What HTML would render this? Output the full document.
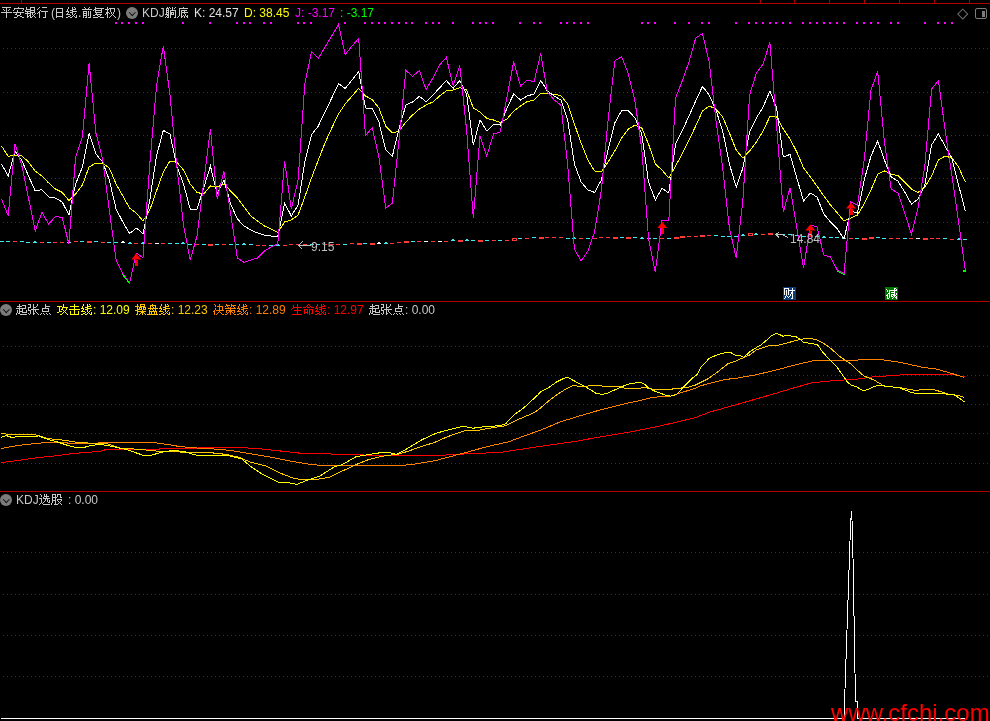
<!DOCTYPE html><html><head><meta charset="utf-8"><style>
html,body{margin:0;padding:0;background:#000;}
body{width:990px;height:721px;position:relative;overflow:hidden;font-family:"Liberation Sans",sans-serif;font-size:12px;}
.t{position:absolute;white-space:nowrap;line-height:14px;height:14px;will-change:transform;}
.ic{position:absolute;width:12px;height:12px;border-radius:50%;background:#7c7c7c;}
.ic:after{content:"";position:absolute;left:3.6px;top:2.6px;width:3.5px;height:3.5px;border-right:1.5px solid #111;border-bottom:1.5px solid #111;transform:rotate(45deg);}
.wm{position:absolute;left:831px;top:698px;color:#ff0000;font-size:24px;line-height:30px;white-space:nowrap;}
</style></head><body>
<svg width="990" height="721" viewBox="0 0 990 721" shape-rendering="crispEdges" style="position:absolute;left:0;top:0"><rect x="0" y="3" width="990" height="1" fill="#b00000"/><rect x="21" y="0" width="1" height="3" fill="#b00000"/><rect x="760" y="0" width="1" height="3" fill="#b00000"/><rect x="794" y="0" width="1" height="3" fill="#b00000"/><rect x="829" y="0" width="1" height="3" fill="#b00000"/><rect x="864" y="0" width="1" height="3" fill="#b00000"/><rect x="899" y="0" width="1" height="3" fill="#b00000"/><rect x="934" y="0" width="1" height="3" fill="#b00000"/><rect x="969" y="0" width="1" height="3" fill="#b00000"/><rect x="0" y="301" width="990" height="1" fill="#b00000"/><rect x="0" y="491" width="990" height="1" fill="#b00000"/><line x1="3" y1="48.5" x2="990" y2="48.5" stroke="#b00000" stroke-width="1" stroke-dasharray="1 3"/><line x1="3" y1="92.5" x2="990" y2="92.5" stroke="#b00000" stroke-width="1" stroke-dasharray="1 3"/><line x1="3" y1="135.5" x2="990" y2="135.5" stroke="#b00000" stroke-width="1" stroke-dasharray="1 3"/><line x1="3" y1="178.5" x2="990" y2="178.5" stroke="#b00000" stroke-width="1" stroke-dasharray="1 3"/><line x1="3" y1="222.5" x2="990" y2="222.5" stroke="#b00000" stroke-width="1" stroke-dasharray="1 3"/><line x1="3" y1="346.5" x2="990" y2="346.5" stroke="#b00000" stroke-width="1" stroke-dasharray="1 3"/><line x1="3" y1="375.5" x2="990" y2="375.5" stroke="#b00000" stroke-width="1" stroke-dasharray="1 3"/><line x1="3" y1="404.5" x2="990" y2="404.5" stroke="#b00000" stroke-width="1" stroke-dasharray="1 3"/><line x1="3" y1="433.5" x2="990" y2="433.5" stroke="#b00000" stroke-width="1" stroke-dasharray="1 3"/><line x1="3" y1="463.5" x2="990" y2="463.5" stroke="#b00000" stroke-width="1" stroke-dasharray="1 3"/><line x1="3" y1="552.5" x2="990" y2="552.5" stroke="#b00000" stroke-width="1" stroke-dasharray="1 3"/><line x1="3" y1="594.5" x2="990" y2="594.5" stroke="#b00000" stroke-width="1" stroke-dasharray="1 3"/><line x1="3" y1="635.5" x2="990" y2="635.5" stroke="#b00000" stroke-width="1" stroke-dasharray="1 3"/><line x1="3" y1="676.5" x2="990" y2="676.5" stroke="#b00000" stroke-width="1" stroke-dasharray="1 3"/><rect x="115" y="22" width="2" height="2" fill="#ff00ff"/><rect x="121" y="22" width="2" height="2" fill="#ff00ff"/><rect x="128" y="22" width="2" height="2" fill="#ff00ff"/><rect x="135" y="22" width="2" height="2" fill="#ff00ff"/><rect x="142" y="22" width="2" height="2" fill="#ff00ff"/><rect x="182" y="22" width="2" height="2" fill="#ff00ff"/><rect x="209" y="22" width="2" height="2" fill="#ff00ff"/><rect x="236" y="22" width="2" height="2" fill="#ff00ff"/><rect x="243" y="22" width="2" height="2" fill="#ff00ff"/><rect x="249" y="22" width="2" height="2" fill="#ff00ff"/><rect x="263" y="22" width="2" height="2" fill="#ff00ff"/><rect x="270" y="22" width="2" height="2" fill="#ff00ff"/><rect x="297" y="22" width="2" height="2" fill="#ff00ff"/><rect x="303" y="22" width="2" height="2" fill="#ff00ff"/><rect x="310" y="22" width="2" height="2" fill="#ff00ff"/><rect x="344" y="22" width="2" height="2" fill="#ff00ff"/><rect x="364" y="22" width="2" height="2" fill="#ff00ff"/><rect x="371" y="22" width="2" height="2" fill="#ff00ff"/><rect x="378" y="22" width="2" height="2" fill="#ff00ff"/><rect x="384" y="22" width="2" height="2" fill="#ff00ff"/><rect x="391" y="22" width="2" height="2" fill="#ff00ff"/><rect x="398" y="22" width="2" height="2" fill="#ff00ff"/><rect x="405" y="22" width="2" height="2" fill="#ff00ff"/><rect x="411" y="22" width="2" height="2" fill="#ff00ff"/><rect x="425" y="22" width="2" height="2" fill="#ff00ff"/><rect x="432" y="22" width="2" height="2" fill="#ff00ff"/><rect x="438" y="22" width="2" height="2" fill="#ff00ff"/><rect x="452" y="22" width="2" height="2" fill="#ff00ff"/><rect x="472" y="22" width="2" height="2" fill="#ff00ff"/><rect x="479" y="22" width="2" height="2" fill="#ff00ff"/><rect x="485" y="22" width="2" height="2" fill="#ff00ff"/><rect x="492" y="22" width="2" height="2" fill="#ff00ff"/><rect x="519" y="22" width="2" height="2" fill="#ff00ff"/><rect x="533" y="22" width="2" height="2" fill="#ff00ff"/><rect x="539" y="22" width="2" height="2" fill="#ff00ff"/><rect x="560" y="22" width="2" height="2" fill="#ff00ff"/><rect x="566" y="22" width="2" height="2" fill="#ff00ff"/><rect x="573" y="22" width="2" height="2" fill="#ff00ff"/><rect x="580" y="22" width="2" height="2" fill="#ff00ff"/><rect x="587" y="22" width="2" height="2" fill="#ff00ff"/><rect x="641" y="22" width="2" height="2" fill="#ff00ff"/><rect x="647" y="22" width="2" height="2" fill="#ff00ff"/><rect x="654" y="22" width="2" height="2" fill="#ff00ff"/><rect x="674" y="22" width="2" height="2" fill="#ff00ff"/><rect x="688" y="22" width="2" height="2" fill="#ff00ff"/><rect x="701" y="22" width="2" height="2" fill="#ff00ff"/><rect x="708" y="22" width="2" height="2" fill="#ff00ff"/><rect x="735" y="22" width="2" height="2" fill="#ff00ff"/><rect x="748" y="22" width="2" height="2" fill="#ff00ff"/><rect x="755" y="22" width="2" height="2" fill="#ff00ff"/><rect x="762" y="22" width="2" height="2" fill="#ff00ff"/><rect x="769" y="22" width="2" height="2" fill="#ff00ff"/><rect x="775" y="22" width="2" height="2" fill="#ff00ff"/><rect x="782" y="22" width="2" height="2" fill="#ff00ff"/><rect x="789" y="22" width="2" height="2" fill="#ff00ff"/><rect x="802" y="22" width="2" height="2" fill="#ff00ff"/><rect x="809" y="22" width="2" height="2" fill="#ff00ff"/><rect x="816" y="22" width="2" height="2" fill="#ff00ff"/><rect x="823" y="22" width="2" height="2" fill="#ff00ff"/><rect x="829" y="22" width="2" height="2" fill="#ff00ff"/><rect x="836" y="22" width="2" height="2" fill="#ff00ff"/><rect x="843" y="22" width="2" height="2" fill="#ff00ff"/><rect x="856" y="22" width="2" height="2" fill="#ff00ff"/><rect x="863" y="22" width="2" height="2" fill="#ff00ff"/><rect x="870" y="22" width="2" height="2" fill="#ff00ff"/><rect x="877" y="22" width="2" height="2" fill="#ff00ff"/><rect x="890" y="22" width="2" height="2" fill="#ff00ff"/><rect x="897" y="22" width="2" height="2" fill="#ff00ff"/><rect x="924" y="22" width="2" height="2" fill="#ff00ff"/><rect x="937" y="22" width="2" height="2" fill="#ff00ff"/><rect x="944" y="22" width="2" height="2" fill="#ff00ff"/><rect x="951" y="22" width="2" height="2" fill="#ff00ff"/><rect x="0" y="241" width="4" height="1" fill="#40e8f0"/><rect x="6" y="241" width="4" height="1" fill="#40e8f0"/><rect x="13" y="241" width="4" height="1" fill="#ff3838"/><rect x="20" y="241" width="4" height="1" fill="#40e8f0"/><rect x="26" y="242" width="4" height="1" fill="#40e8f0"/><rect x="33" y="242" width="4" height="1" fill="#40e8f0"/><rect x="34" y="241" width="2" height="1" fill="#40e8f0"/><rect x="40" y="242" width="4" height="1" fill="#ff3838"/><rect x="47" y="242" width="4" height="1" fill="#40e8f0"/><rect x="53" y="242" width="4" height="1" fill="#ff3838"/><rect x="60" y="242" width="4" height="1" fill="#ff3838"/><rect x="67" y="242" width="4" height="1" fill="#40e8f0"/><rect x="74" y="241" width="4" height="1" fill="#ff3838"/><rect x="80" y="241" width="4" height="1" fill="#40e8f0"/><rect x="87" y="241" width="5" height="2" fill="#ff3838"/><rect x="94" y="241" width="4" height="1" fill="#40e8f0"/><rect x="101" y="242" width="4" height="1" fill="#ff3838"/><rect x="107" y="242" width="4" height="1" fill="#40e8f0"/><rect x="114" y="242" width="4" height="1" fill="#40e8f0"/><rect x="121" y="242" width="4" height="1" fill="#ffffff"/><rect x="122" y="241" width="2" height="1" fill="#ffffff"/><rect x="128" y="243" width="4" height="1" fill="#40e8f0"/><rect x="129" y="242" width="2" height="1" fill="#40e8f0"/><rect x="134" y="243" width="4" height="1" fill="#ff3838"/><rect x="141" y="243" width="4" height="1" fill="#40e8f0"/><rect x="142" y="242" width="2" height="1" fill="#40e8f0"/><rect x="148" y="243" width="4" height="1" fill="#ff3838"/><rect x="155" y="243" width="4" height="1" fill="#ffffff"/><rect x="161" y="243" width="4" height="1" fill="#ff3838"/><rect x="168" y="243" width="4" height="1" fill="#40e8f0"/><rect x="175" y="243" width="4" height="1" fill="#40e8f0"/><rect x="181" y="243" width="4" height="1" fill="#40e8f0"/><rect x="182" y="242" width="2" height="1" fill="#40e8f0"/><rect x="188" y="244" width="4" height="1" fill="#40e8f0"/><rect x="195" y="244" width="4" height="1" fill="#ff3838"/><rect x="202" y="244" width="4" height="1" fill="#40e8f0"/><rect x="208" y="244" width="5" height="2" fill="#ff3838"/><rect x="215" y="244" width="4" height="1" fill="#40e8f0"/><rect x="222" y="244" width="4" height="1" fill="#ff3838"/><rect x="229" y="244" width="4" height="1" fill="#40e8f0"/><rect x="235" y="244" width="4" height="1" fill="#40e8f0"/><rect x="242" y="244" width="4" height="1" fill="#40e8f0"/><rect x="243" y="243" width="2" height="1" fill="#40e8f0"/><rect x="249" y="244" width="4" height="1" fill="#40e8f0"/><rect x="256" y="245" width="4" height="1" fill="#ff3838"/><rect x="262" y="245" width="4" height="1" fill="#ff3838"/><rect x="269" y="245" width="4" height="1" fill="#40e8f0"/><rect x="276" y="245" width="4" height="1" fill="#40e8f0"/><rect x="277" y="244" width="2" height="1" fill="#40e8f0"/><rect x="283" y="245" width="4" height="1" fill="#ff3838"/><rect x="289" y="244" width="4" height="1" fill="#ff3838"/><rect x="296" y="244" width="4" height="1" fill="#ff3838"/><rect x="303" y="244" width="4" height="1" fill="#ff3838"/><rect x="310" y="244" width="4" height="1" fill="#40e8f0"/><rect x="316" y="244" width="4" height="1" fill="#40e8f0"/><rect x="323" y="244" width="4" height="1" fill="#ff3838"/><rect x="330" y="244" width="4" height="1" fill="#ff3838"/><rect x="336" y="244" width="4" height="1" fill="#ff3838"/><rect x="343" y="244" width="4" height="1" fill="#40e8f0"/><rect x="350" y="243" width="4" height="1" fill="#ff3838"/><rect x="357" y="243" width="5" height="2" fill="#ff3838"/><rect x="363" y="243" width="4" height="1" fill="#40e8f0"/><rect x="370" y="243" width="5" height="2" fill="#ff3838"/><rect x="377" y="243" width="4" height="1" fill="#ffffff"/><rect x="378" y="242" width="2" height="1" fill="#ffffff"/><rect x="384" y="243" width="4" height="1" fill="#40e8f0"/><rect x="385" y="242" width="2" height="1" fill="#40e8f0"/><rect x="390" y="243" width="4" height="1" fill="#ff3838"/><rect x="397" y="242" width="4" height="1" fill="#ff3838"/><rect x="404" y="241" width="5" height="2" fill="#ff3838"/><rect x="411" y="241" width="4" height="1" fill="#40e8f0"/><rect x="417" y="241" width="4" height="1" fill="#ff3838"/><rect x="424" y="241" width="4" height="1" fill="#ffffff"/><rect x="431" y="241" width="4" height="1" fill="#ff3838"/><rect x="438" y="241" width="4" height="1" fill="#ffffff"/><rect x="444" y="241" width="4" height="1" fill="#ff3838"/><rect x="451" y="240" width="4" height="1" fill="#40e8f0"/><rect x="452" y="239" width="2" height="1" fill="#40e8f0"/><rect x="458" y="240" width="5" height="2" fill="#ff3838"/><rect x="465" y="240" width="4" height="1" fill="#40e8f0"/><rect x="466" y="239" width="2" height="1" fill="#40e8f0"/><rect x="471" y="240" width="4" height="1" fill="#40e8f0"/><rect x="478" y="240" width="5" height="2" fill="#ff3838"/><rect x="485" y="240" width="4" height="1" fill="#40e8f0"/><rect x="492" y="240" width="4" height="1" fill="#ff3838"/><rect x="498" y="240" width="4" height="1" fill="#40e8f0"/><rect x="505" y="240" width="4" height="1" fill="#ff3838"/><rect x="512.5" y="238.5" width="4" height="2" fill="none" stroke="#ff3838" stroke-width="1"/><rect x="518" y="238" width="4" height="1" fill="#40e8f0"/><rect x="525" y="238" width="4" height="1" fill="#ff3838"/><rect x="532" y="237" width="4" height="1" fill="#40e8f0"/><rect x="539" y="237" width="5" height="2" fill="#ff3838"/><rect x="545" y="237" width="4" height="1" fill="#ff3838"/><rect x="552" y="237" width="4" height="1" fill="#ff3838"/><rect x="559" y="237" width="4" height="1" fill="#ff3838"/><rect x="566" y="238" width="4" height="1" fill="#40e8f0"/><rect x="572" y="238" width="4" height="1" fill="#40e8f0"/><rect x="573" y="237" width="2" height="1" fill="#40e8f0"/><rect x="579" y="238" width="4" height="1" fill="#ff3838"/><rect x="586" y="238" width="4" height="1" fill="#40e8f0"/><rect x="593" y="238" width="4" height="1" fill="#ff3838"/><rect x="599" y="237" width="4" height="1" fill="#ff3838"/><rect x="606" y="237" width="4" height="1" fill="#ff3838"/><rect x="613" y="237" width="5" height="2" fill="#ff3838"/><rect x="620" y="237" width="4" height="1" fill="#40e8f0"/><rect x="626" y="237" width="5" height="2" fill="#ff3838"/><rect x="633" y="237" width="4" height="1" fill="#40e8f0"/><rect x="640" y="238" width="4" height="1" fill="#40e8f0"/><rect x="641" y="237" width="2" height="1" fill="#40e8f0"/><rect x="647" y="238" width="4" height="1" fill="#40e8f0"/><rect x="653" y="238" width="4" height="1" fill="#40e8f0"/><rect x="660" y="238" width="4" height="1" fill="#ff3838"/><rect x="667" y="238" width="4" height="1" fill="#40e8f0"/><rect x="674" y="237" width="5" height="2" fill="#ff3838"/><rect x="680" y="236" width="5" height="2" fill="#ff3838"/><rect x="687" y="236" width="4" height="1" fill="#ff3838"/><rect x="694" y="236" width="4" height="1" fill="#ff3838"/><rect x="700" y="235" width="5" height="2" fill="#ff3838"/><rect x="707" y="235" width="4" height="1" fill="#ff3838"/><rect x="714" y="235" width="4" height="1" fill="#40e8f0"/><rect x="721" y="236" width="4" height="1" fill="#40e8f0"/><rect x="727" y="236" width="4" height="1" fill="#40e8f0"/><rect x="734" y="236" width="4" height="1" fill="#40e8f0"/><rect x="741" y="235" width="4" height="1" fill="#40e8f0"/><rect x="742" y="234" width="2" height="1" fill="#40e8f0"/><rect x="748.5" y="233.5" width="4" height="2" fill="none" stroke="#ff3838" stroke-width="1"/><rect x="754" y="234" width="4" height="1" fill="#40e8f0"/><rect x="755" y="233" width="2" height="1" fill="#40e8f0"/><rect x="761" y="234" width="4" height="1" fill="#ff3838"/><rect x="768" y="233" width="5" height="2" fill="#ff3838"/><rect x="775" y="234" width="4" height="1" fill="#40e8f0"/><rect x="781" y="234" width="4" height="1" fill="#40e8f0"/><rect x="788" y="234" width="4" height="1" fill="#40e8f0"/><rect x="795" y="235" width="4" height="1" fill="#40e8f0"/><rect x="802" y="236" width="4" height="1" fill="#40e8f0"/><rect x="808" y="236" width="4" height="1" fill="#40e8f0"/><rect x="815" y="236" width="4" height="1" fill="#40e8f0"/><rect x="822" y="237" width="4" height="1" fill="#40e8f0"/><rect x="823" y="236" width="2" height="1" fill="#40e8f0"/><rect x="829" y="237" width="4" height="1" fill="#40e8f0"/><rect x="835" y="237" width="4" height="1" fill="#40e8f0"/><rect x="842" y="238" width="4" height="1" fill="#40e8f0"/><rect x="843" y="237" width="2" height="1" fill="#40e8f0"/><rect x="849" y="238" width="4" height="1" fill="#ff3838"/><rect x="855" y="238" width="4" height="1" fill="#40e8f0"/><rect x="862" y="238" width="5" height="2" fill="#ff3838"/><rect x="869" y="237" width="5" height="2" fill="#ff3838"/><rect x="876" y="237" width="4" height="1" fill="#40e8f0"/><rect x="882" y="238" width="4" height="1" fill="#40e8f0"/><rect x="889" y="238" width="4" height="1" fill="#ff3838"/><rect x="896" y="238" width="4" height="1" fill="#ff3838"/><rect x="903" y="238" width="4" height="1" fill="#40e8f0"/><rect x="909" y="238" width="4" height="1" fill="#ff3838"/><rect x="916" y="238" width="4" height="1" fill="#ffffff"/><rect x="923" y="238" width="5" height="2" fill="#ff3838"/><rect x="930" y="238" width="4" height="1" fill="#ff3838"/><rect x="936" y="238" width="4" height="1" fill="#ff3838"/><rect x="943" y="238" width="4" height="1" fill="#40e8f0"/><rect x="950" y="239" width="4" height="1" fill="#ff3838"/><rect x="957" y="239" width="4" height="1" fill="#40e8f0"/><rect x="958" y="238" width="2" height="1" fill="#40e8f0"/><rect x="963" y="239" width="4" height="1" fill="#40e8f0"/><polyline points="1.5,146 8.2,156.4 15,155 21.7,155.6 28.5,162 35.2,171 41.9,176 48.7,183 55.4,189 62.2,192.4 68.9,200.4 75.6,194 82.4,185 89.1,167 95.9,163 102.6,163 109.3,168 116.1,184 122.8,196 129.6,208 136.3,213 143,221 149.8,210 156.5,191 163.3,172 170,161 176.7,162 183.5,170 190.2,184 197,192.4 203.7,194 210.4,186 217.2,187 223.9,184 230.7,191 237.4,198 244.1,207 250.9,216 257.6,221 264.4,226 271.1,229 277.8,232.4 284.6,222 291.3,220 298.1,215 304.8,197 311.5,178 318.3,160 325,143 331.8,128 338.5,114 345.2,104 352,96 358.7,88.4 365.5,96 372.2,99.6 378.9,108 385.7,126 392.4,133 399.2,131 405.9,122 412.6,115 419.4,109 426.1,105 432.9,102 439.6,96 446.3,91 453.1,90 459.8,87.6 466.6,90 473.3,108 480,112 486.8,118.4 493.5,120 500.3,122.4 507,119 513.7,111 520.5,106 527.2,101.6 534,100 540.7,93.6 547.4,93.6 554.2,94.4 560.9,95.6 567.7,104 574.4,124 581.1,143 587.9,160 594.6,171 601.4,171.6 608.1,162 614.8,151 621.6,138 628.3,129 635.1,125 641.8,128 648.5,144 655.3,164 662,170 668.8,178 675.5,166 682.2,154 689,140 695.7,126 702.5,111 709.2,106 715.9,109 722.7,117 729.4,133 736.2,150 742.9,158 749.6,151 756.4,142 763.1,131 769.9,116.4 776.6,117 783.3,129 790.1,139 796.8,152 803.6,168 810.3,177 817,186 823.8,196 830.5,205 837.3,213 844,221 850.7,218 857.5,215 864.2,204 871,190 877.7,174 884.4,171 891.2,174 897.9,175.6 904.7,182 911.4,189 918.1,192.4 924.9,187 931.6,176 938.4,160 945.1,156 951.8,158 958.6,167 965.3,182" fill="none" stroke="#ffff00" stroke-width="1" /><polyline points="1.5,164 8.2,176 15,151 21.7,160 28.5,176 35.2,191 41.9,189.6 48.7,197 55.4,198 62.2,202 68.9,215 75.6,184 82.4,167 89.1,133.6 95.9,154 102.6,162 109.3,180 116.1,209 122.8,222 129.6,233.6 136.3,228 143,233.6 149.8,200 156.5,156 163.3,130.4 170,134 176.7,166 183.5,184 190.2,209 197,209 203.7,188 210.4,166 217.2,194 223.9,180 230.7,204 237.4,219 244.1,226 250.9,230 257.6,233 264.4,235 271.1,236 277.8,236.4 284.6,203 291.3,216 298.1,205 304.8,162 311.5,135 318.3,126 325,112 331.8,98 338.5,83.6 345.2,88.4 352,80 358.7,71.6 365.5,108 372.2,108.4 378.9,122 385.7,150 392.4,156 399.2,128 405.9,105 412.6,102 419.4,96.4 426.1,101.6 432.9,95 439.6,88 446.3,80.4 453.1,88.4 459.8,80.4 466.6,94 473.3,145 480,120 486.8,131 493.5,124.4 500.3,125 507,108 513.7,94 520.5,100 527.2,96 534,94 540.7,80.4 547.4,91 554.2,96 560.9,100 567.7,120 574.4,164 581.1,182 587.9,190 594.6,192.4 601.4,180 608.1,150 614.8,123 621.6,110.6 628.3,110.6 635.1,118 641.8,134 648.5,182 655.3,200 662,188.4 668.8,193 675.5,144 682.2,131 689,116 695.7,101 702.5,86.4 709.2,95 715.9,110 722.7,131 729.4,164 736.2,187 742.9,168 749.6,132 756.4,118 763.1,107 769.9,91 776.6,108 783.3,157 790.1,154.4 796.8,178 803.6,201 810.3,193 817,197 823.8,214 830.5,222 837.3,229 844,239 850.7,211 857.5,213 864.2,180 871,156 877.7,141 884.4,160 891.2,177 897.9,181 904.7,192 911.4,204 918.1,199 924.9,185 931.6,145 938.4,134 945.1,146 951.8,158 958.6,185 965.3,211" fill="none" stroke="#ffffff" stroke-width="1" /><polyline points="1.5,199 8.2,215.6 15,143.6 21.7,165 28.5,198 35.2,231 41.9,212.4 48.7,224 55.4,216.6 62.2,217.4 68.9,244 75.6,157 82.4,137 89.1,63 95.9,133 102.6,159 109.3,210 116.1,260 122.8,273.6 129.6,283 136.3,253 143,257.6 149.8,164 156.5,86 163.3,46 170,95 176.7,165 183.5,225 190.2,260 197,236 203.7,182 210.4,129 217.2,199 223.9,171 230.7,214 237.4,258 244.1,262.4 250.9,260 257.6,258 264.4,251 271.1,247 277.8,244 284.6,161 291.3,209 298.1,180 304.8,84 311.5,51.6 318.3,58.4 325,47 331.8,36 338.5,24.4 345.2,54.4 352,46 358.7,38.4 365.5,135.6 372.2,127.6 378.9,157 385.7,208 392.4,203 399.2,138 405.9,70.4 412.6,76.4 419.4,70.4 426.1,89.6 432.9,78 439.6,65 446.3,57.4 453.1,85.6 459.8,65.6 466.6,130 473.3,218 480,135.6 486.8,156 493.5,134 500.3,132 507,97 513.7,61.6 520.5,86 527.2,80 534,82 540.7,53.6 547.4,92 554.2,100 560.9,105 567.7,165 574.4,249 581.1,261 587.9,251 594.6,232 601.4,190 608.1,120 614.8,61 621.6,56.6 628.3,73.6 635.1,102 641.8,149 648.5,238 655.3,272 662,220.4 668.8,221 675.5,98 682.2,81 689,62 695.7,38 702.5,33.6 709.2,62 715.9,120 722.7,168 729.4,228 736.2,258 742.9,200 749.6,95 756.4,73 763.1,64 769.9,42.4 776.6,126 783.3,212 790.1,187.6 796.8,228 803.6,268 810.3,225 817,227 823.8,255 830.5,257 837.3,270 844,273.6 850.7,202 857.5,205 864.2,160 871,90 877.7,71.6 884.4,142 891.2,189 897.9,193 904.7,213 911.4,234 918.1,208 924.9,165 931.6,89 938.4,80.5 945.1,130 951.8,175 958.6,222 965.3,270.4" fill="none" stroke="#ff00ff" stroke-width="1" /><polyline points="122.5,274.5 129.5,283.5" fill="none" stroke="#00ff00" stroke-width="1" stroke-width="2"/><polyline points="837.5,271 844.5,275" fill="none" stroke="#00ff00" stroke-width="1" stroke-width="2"/><rect x="963" y="270" width="3" height="2" fill="#00ff00"/><path d="M298.5,245.5 H310.5 M298.5,245.5 L302.5,241.5 M298.5,245.5 L302.5,249.5" stroke="#c0c0c0" fill="none" stroke-width="1"/><path d="M776,234.5 L782,234.5 L788,237.5 M776,234.5 L779,232 M776,234.5 L779,237.5" stroke="#c0c0c0" fill="none" stroke-width="1"/><polygon points="136.3,253.5 131.3,259.5 141.3,259.5" fill="#ff0000" shape-rendering="auto"/><rect x="134.8" y="259.5" width="3" height="6" fill="#ff0000"/><polygon points="662.3,222 657.3,228 667.3,228" fill="#ff0000" shape-rendering="auto"/><rect x="660.8" y="228" width="3" height="6" fill="#ff0000"/><polygon points="810.3,224.5 805.3,230.5 815.3,230.5" fill="#ff0000" shape-rendering="auto"/><rect x="808.8" y="230.5" width="3" height="6" fill="#ff0000"/><polygon points="851,202.5 846,208.5 856,208.5" fill="#ff0000" shape-rendering="auto"/><rect x="849.5" y="208.5" width="3" height="6" fill="#ff0000"/><polyline points="1,462.5 11,461.5 25,459.5 39,457.5 59,455.5 72,453.5 86,452.5 99,451.5 106,449.6 159,449.2 161,448.4 198,448 214,447.4 248,448 262,449 286,451.6 302,453.4 349,454.4 369,455.2 389,456 436,455.6 464,454 500,452.4 540,446.4 578,441 585,439.6 630,432 660,426 694,418 710,412 740,403.6 768,395.6 790,389 811.7,382.8 834,380.6 855,379.4 872,377 900,375 930,374.6 955,375 964.5,376.8" fill="none" stroke="#ff0000" stroke-width="1" /><polyline points="1,448.5 12,446.5 26,444.5 46,442.5 65,442.5 70,443.5 93,443.5 106,442.2 153,442.4 167,444.4 180,446.6 194,447.8 214,449 230,450.4 250,453.6 270,457 290,461 310,464.4 322,465.4 403,465.3 415,464 435,460.7 464,453 488,446.4 508,442 524,436 540,430.4 560,422 578,416.4 600,410 630,402.5 640,400.6 651.1,397.8 659.4,396.7 671.1,396.1 678.9,393.3 695.6,388.3 701.1,385.6 712.2,382.8 725.6,379.4 736.7,378.3 746.7,376.3 752.8,375.6 776.1,370 797.2,364.4 813.9,360.6 840.6,360.6 870,359.6 884,360 900,362.3 922.7,367.3 936.4,369 951,373.2 963.6,377.3" fill="none" stroke="#ff8000" stroke-width="1" /><polyline points="1,433.5 11,434.5 32,434.5 39,435.5 44,437.5 47,438.5 57,439.5 66,440.5 72,441.5 79,442.8 106,443.4 120,448 140,449.4 160,451.4 180,452 190,453 208,452.4 226,454.4 238,457 250,462 266,466 280,473 294,478.4 302,479.6 314,480 330,477 335,474.5 356,464.6 369,459.4 386,455.5 398,454.4 409,450.9 422,446.3 435,442.3 441,439.4 452,435 465.6,430.6 476.7,430.6 485.6,428.9 496.7,427 503.3,426.3 506.7,425.2 514.4,421.1 522.2,417.8 530,414.4 535.6,411.7 540,408.3 550.6,399.4 557.2,394.4 566.1,388.9 573.9,385.3 578.3,386.4 598.3,385.6 605,386.4 618.3,386.4 625,388.3 638.3,388.3 645,387.6 653.3,389.4 672.2,389.4 673.3,388.3 686.7,387.8 695.6,385 708.9,378.3 717.8,371.7 727.8,363.9 736.7,360.6 750,354.8 756.1,350 769.4,345.6 779.4,345 791.7,341.7 800.6,339.4 808.3,338.3 816.1,339.4 822.8,342.8 829.4,347.2 839.4,356.1 847.2,361.7 851.7,364.4 855,368.3 864,376 874,380 884,386 900,387.7 915.5,390.5 922.7,389.5 933.6,389.5 941,391.8 950,394.5 958,395.5 964.5,397.3" fill="none" stroke="#ffc800" stroke-width="1" /><polyline points="1,437.5 6,435.5 12,437.5 18,436.5 39,436 48,439.5 56,441.5 62,443.5 68,445.5 76,447.5 84,447.5 90,445.6 100,444.4 112,446.4 128,450 144,455.6 152,455 164,451.6 174,450.4 184,451.6 198,455.6 210,455 220,456 226,455 242,459 250,466 262,474 278,482 288,482.6 297,484.4 306,480.6 320,476 334,467 342,464.6 356,456.8 369,454.4 384,452.2 389,452.6 396,454.4 401,452.2 409,447.6 422,439.7 435,433.8 443.3,431.1 458.9,427.2 464.4,426.3 468.9,427.4 473.3,428.3 477.8,427.2 490,426.7 502.2,425 505.6,423.9 510,418.9 514.4,414.4 518.9,411.4 524.4,407.2 531.1,401.1 537.8,395 540.6,391.7 549.4,387.2 556.1,382.2 563.9,378.3 567.2,377.2 570.6,378.9 582.8,385.6 587.2,387.8 596.1,393.3 601.7,394.4 607.2,393.3 619.4,387.8 627.2,384.4 632.8,383.3 640.6,382.2 645,384.4 647.8,387.2 653.3,390.6 657.8,392.2 666.7,395.6 671.1,396.1 676.7,394.4 684.4,386.1 692.2,378.3 697.2,374.4 701.1,366.7 709.4,358.3 716.7,355 726.7,352.2 731.1,352.8 735.6,355.2 741.1,356.1 743.9,357.2 750.6,351.1 761.7,344.4 771.7,335.6 776.7,333.3 782.8,336.1 788.3,335.6 796.1,336.7 799.4,338.9 803.3,342.2 809.4,343.3 817.2,344.4 822.8,352.2 829.4,359.4 837.2,367.2 841.7,373.9 847.2,381.7 851.7,385.6 855,386.1 864,391 878,385 888,386.4 900,388 911,392.3 915.5,393.5 941.8,393.5 954.5,395 964.5,401.8" fill="none" stroke="#ffff00" stroke-width="1" /><polyline points="1,718.5 844.5,718.5 844.5,704 849.5,556 850.5,526 851.5,511 852.5,529 855.5,701 857.5,701 857.5,718.5 965,718.5" fill="none" stroke="#ffffff" stroke-width="1" /></svg>
<div class="t" style="left:50.5px;top:6px;color:#c8c8c8;">(</div>
<div class="t" style="left:78px;top:6px;color:#c8c8c8;">.</div>
<div class="t" style="left:116.5px;top:6px;color:#c8c8c8;">)</div>
<div class="ic" style="left:126px;top:7px"></div>
<div class="t" style="left:142px;top:6px;color:#c8c8c8;">KDJ</div>
<div class="t" style="left:194px;top:6px;color:#e0e0e0;">K: 24.57</div>
<div class="t" style="left:244px;top:6px;color:#ffff00;">D: 38.45</div>
<div class="t" style="left:294.5px;top:6px;color:#ff00ff;">J: -3.17</div>
<div class="t" style="left:339.5px;top:6px;color:#00ff00;">: -3.17</div>
<div style="position:absolute;left:958.6px;top:9.5px;width:5.5px;height:5.5px;border:1px solid #707070;transform:rotate(45deg)"></div>
<div style="position:absolute;left:975px;top:8px;width:10px;height:9px;border:1px solid #7c7c7c;border-radius:2px"></div>
<div style="position:absolute;left:982px;top:11px;width:3px;height:6px;background:#7c7c7c"></div>
<div class="ic" style="left:0px;top:304px"></div>
<div class="t" style="left:93px;top:303px;color:#ffff00;">: 12.09</div>
<div class="t" style="left:171px;top:303px;color:#ffc800;">: 12.23</div>
<div class="t" style="left:249px;top:303px;color:#ff8000;">: 12.89</div>
<div class="t" style="left:327px;top:303px;color:#ff0000;">: 12.97</div>
<div class="t" style="left:405px;top:303px;color:#c8c8c8;">: 0.00</div>
<div class="ic" style="left:0px;top:494px"></div>
<div class="t" style="left:16px;top:493px;color:#c8c8c8;">KDJ</div>
<div class="t" style="left:68px;top:493px;color:#c8c8c8;">: 0.00</div>
<div class="t" style="left:311px;top:240px;color:#c0c0c0;">9.15</div>
<div class="t" style="left:790px;top:232px;color:#c0c0c0;">14.84</div>
<div style="position:absolute;left:783px;top:287px;width:13px;height:13px;background:#0a3c78"></div>
<div style="position:absolute;left:885px;top:287px;width:13px;height:13px;background:#007800"></div>
<svg width="990" height="721" style="position:absolute;left:0;top:0" shape-rendering="crispEdges"><path fill="#c8c8c8" d="M2 7h9v1h-9zM6 8h1v1h-1zM3 9h1v1h-1zM6 9h1v1h-1zM9 9h1v1h-1zM4 10h1v1h-1zM6 10h1v1h-1zM8 10h1v1h-1zM6 11h1v1h-1zM1 12h11v1h-11zM6 13h1v1h-1zM6 14h1v1h-1zM6 15h1v1h-1zM6 16h1v1h-1zM6 17h1v1h-1zM18 7h1v1h-1zM14 8h10v1h-10zM14 9h1v1h-1zM23 9h1v1h-1zM13 10h1v1h-1zM17 10h1v1h-1zM22 10h1v1h-1zM17 11h1v1h-1zM13 12h11v1h-11zM16 13h1v1h-1zM20 13h1v1h-1zM15 14h2v1h-2zM20 14h1v1h-1zM17 15h3v1h-3zM17 16h1v1h-1zM20 16h2v1h-2zM14 17h3v1h-3zM22 17h2v1h-2zM26 7h1v1h-1zM30 7h5v1h-5zM26 8h1v1h-1zM30 8h1v1h-1zM34 8h1v1h-1zM26 9h5v1h-5zM34 9h1v1h-1zM25 10h1v1h-1zM30 10h5v1h-5zM25 11h6v1h-6zM34 11h1v1h-1zM27 12h1v1h-1zM30 12h5v1h-5zM25 13h6v1h-6zM32 13h1v1h-1zM35 13h1v1h-1zM27 14h1v1h-1zM30 14h1v1h-1zM32 14h1v1h-1zM34 14h1v1h-1zM27 15h1v1h-1zM29 15h2v1h-2zM33 15h1v1h-1zM27 16h2v1h-2zM30 16h1v1h-1zM32 16h1v1h-1zM34 16h1v1h-1zM27 17h1v1h-1zM30 17h2v1h-2zM35 17h1v1h-1zM39 7h1v1h-1zM42 7h5v1h-5zM38 8h1v1h-1zM37 9h1v1h-1zM40 10h1v1h-1zM39 11h1v1h-1zM41 11h7v1h-7zM38 12h2v1h-2zM45 12h1v1h-1zM37 13h1v1h-1zM39 13h1v1h-1zM45 13h1v1h-1zM39 14h1v1h-1zM45 14h1v1h-1zM39 15h1v1h-1zM45 15h1v1h-1zM39 16h1v1h-1zM45 16h1v1h-1zM39 17h1v1h-1zM43 17h3v1h-3zM56 8h7v1h-7zM56 9h1v1h-1zM62 9h1v1h-1zM56 10h1v1h-1zM62 10h1v1h-1zM56 11h1v1h-1zM62 11h1v1h-1zM56 12h7v1h-7zM56 13h1v1h-1zM62 13h1v1h-1zM56 14h1v1h-1zM62 14h1v1h-1zM56 15h1v1h-1zM62 15h1v1h-1zM56 16h7v1h-7zM56 17h1v1h-1zM62 17h1v1h-1zM68 7h1v1h-1zM72 7h1v1h-1zM74 7h1v1h-1zM68 8h1v1h-1zM72 8h1v1h-1zM75 8h1v1h-1zM67 9h1v1h-1zM72 9h4v1h-4zM67 10h1v1h-1zM70 10h3v1h-3zM66 11h3v1h-3zM72 11h5v1h-5zM68 12h1v1h-1zM70 12h3v1h-3zM67 13h1v1h-1zM72 13h1v1h-1zM75 13h1v1h-1zM66 14h4v1h-4zM72 14h1v1h-1zM74 14h1v1h-1zM70 15h1v1h-1zM73 15h1v1h-1zM76 15h1v1h-1zM68 16h2v1h-2zM72 16h1v1h-1zM74 16h1v1h-1zM76 16h1v1h-1zM66 17h2v1h-2zM70 17h2v1h-2zM75 17h2v1h-2zM84 7h1v1h-1zM89 7h1v1h-1zM85 8h1v1h-1zM88 8h1v1h-1zM82 9h10v1h-10zM83 11h4v1h-4zM88 11h1v1h-1zM90 11h1v1h-1zM83 12h1v1h-1zM86 12h1v1h-1zM88 12h1v1h-1zM90 12h1v1h-1zM83 13h4v1h-4zM88 13h1v1h-1zM90 13h1v1h-1zM83 14h1v1h-1zM86 14h1v1h-1zM88 14h1v1h-1zM90 14h1v1h-1zM83 15h4v1h-4zM88 15h1v1h-1zM90 15h1v1h-1zM83 16h1v1h-1zM86 16h1v1h-1zM90 16h1v1h-1zM83 17h1v1h-1zM85 17h2v1h-2zM88 17h3v1h-3zM95 7h1v1h-1zM95 8h9v1h-9zM94 9h2v1h-2zM101 9h1v1h-1zM93 10h1v1h-1zM95 10h7v1h-7zM95 11h1v1h-1zM101 11h1v1h-1zM95 12h7v1h-7zM96 13h1v1h-1zM95 14h7v1h-7zM93 15h2v1h-2zM97 15h1v1h-1zM100 15h1v1h-1zM98 16h2v1h-2zM93 17h5v1h-5zM100 17h4v1h-4zM107 7h1v1h-1zM107 8h1v1h-1zM109 8h6v1h-6zM105 9h4v1h-4zM110 9h1v1h-1zM114 9h1v1h-1zM107 10h1v1h-1zM110 10h1v1h-1zM114 10h1v1h-1zM107 11h1v1h-1zM110 11h1v1h-1zM114 11h1v1h-1zM106 12h3v1h-3zM111 12h1v1h-1zM113 12h1v1h-1zM106 13h2v1h-2zM109 13h1v1h-1zM111 13h1v1h-1zM113 13h1v1h-1zM105 14h1v1h-1zM107 14h1v1h-1zM112 14h1v1h-1zM107 15h1v1h-1zM111 15h1v1h-1zM113 15h1v1h-1zM107 16h1v1h-1zM110 16h1v1h-1zM114 16h1v1h-1zM107 17h1v1h-1zM109 17h1v1h-1zM115 17h1v1h-1zM167 7h1v1h-1zM169 7h1v1h-1zM172 7h1v1h-1zM175 7h1v1h-1zM166 8h3v1h-3zM170 8h1v1h-1zM172 8h1v1h-1zM174 8h1v1h-1zM166 9h1v1h-1zM168 9h1v1h-1zM172 9h1v1h-1zM166 10h3v1h-3zM170 10h6v1h-6zM166 11h1v1h-1zM168 11h1v1h-1zM170 11h1v1h-1zM175 11h1v1h-1zM166 12h3v1h-3zM170 12h4v1h-4zM175 12h1v1h-1zM166 13h1v1h-1zM168 13h1v1h-1zM170 13h2v1h-2zM173 13h1v1h-1zM175 13h1v1h-1zM165 14h4v1h-4zM170 14h4v1h-4zM175 14h1v1h-1zM167 15h2v1h-2zM170 15h1v1h-1zM175 15h1v1h-1zM166 16h1v1h-1zM168 16h1v1h-1zM170 16h1v1h-1zM175 16h1v1h-1zM165 17h1v1h-1zM167 17h2v1h-2zM170 17h1v1h-1zM174 17h2v1h-2zM183 7h1v1h-1zM179 8h9v1h-9zM179 9h1v1h-1zM179 10h1v1h-1zM181 10h6v1h-6zM179 11h1v1h-1zM181 11h1v1h-1zM184 11h1v1h-1zM179 12h1v1h-1zM181 12h7v1h-7zM179 13h1v1h-1zM181 13h1v1h-1zM184 13h1v1h-1zM179 14h1v1h-1zM181 14h1v1h-1zM185 14h1v1h-1zM179 15h1v1h-1zM181 15h1v1h-1zM183 15h1v1h-1zM185 15h1v1h-1zM187 15h1v1h-1zM178 16h1v1h-1zM181 16h2v1h-2zM184 16h1v1h-1zM186 16h2v1h-2zM177 17h1v1h-1zM181 17h1v1h-1zM184 17h1v1h-1zM187 17h1v1h-1zM19 304h1v1h-1zM19 305h1v1h-1zM22 305h4v1h-4zM17 306h5v1h-5zM25 306h1v1h-1zM19 307h1v1h-1zM25 307h1v1h-1zM16 308h10v1h-10zM19 309h1v1h-1zM22 309h1v1h-1zM17 310h1v1h-1zM19 310h1v1h-1zM22 310h1v1h-1zM26 310h1v1h-1zM17 311h1v1h-1zM19 311h4v1h-4zM26 311h1v1h-1zM17 312h1v1h-1zM19 312h1v1h-1zM22 312h5v1h-5zM16 313h1v1h-1zM18 313h2v1h-2zM16 314h1v1h-1zM20 314h7v1h-7zM28 304h3v1h-3zM33 304h1v1h-1zM37 304h1v1h-1zM30 305h1v1h-1zM33 305h1v1h-1zM37 305h1v1h-1zM30 306h1v1h-1zM33 306h1v1h-1zM36 306h1v1h-1zM28 307h3v1h-3zM33 307h3v1h-3zM28 308h1v1h-1zM33 308h1v1h-1zM28 309h1v1h-1zM31 309h8v1h-8zM28 310h3v1h-3zM33 310h1v1h-1zM35 310h1v1h-1zM30 311h1v1h-1zM33 311h1v1h-1zM35 311h1v1h-1zM30 312h1v1h-1zM33 312h1v1h-1zM36 312h1v1h-1zM28 313h1v1h-1zM30 313h1v1h-1zM33 313h2v1h-2zM37 313h1v1h-1zM29 314h1v1h-1zM33 314h1v1h-1zM38 314h1v1h-1zM45 304h1v1h-1zM45 305h1v1h-1zM45 306h5v1h-5zM45 307h1v1h-1zM42 308h7v1h-7zM42 309h1v1h-1zM48 309h1v1h-1zM42 310h1v1h-1zM48 310h1v1h-1zM42 311h7v1h-7zM41 313h1v1h-1zM43 313h1v1h-1zM46 313h1v1h-1zM49 313h1v1h-1zM40 314h1v1h-1zM44 314h1v1h-1zM47 314h1v1h-1zM50 314h1v1h-1zM372 304h1v1h-1zM372 305h1v1h-1zM375 305h4v1h-4zM370 306h5v1h-5zM378 306h1v1h-1zM372 307h1v1h-1zM378 307h1v1h-1zM369 308h10v1h-10zM372 309h1v1h-1zM375 309h1v1h-1zM370 310h1v1h-1zM372 310h1v1h-1zM375 310h1v1h-1zM379 310h1v1h-1zM370 311h1v1h-1zM372 311h4v1h-4zM379 311h1v1h-1zM370 312h1v1h-1zM372 312h1v1h-1zM375 312h5v1h-5zM369 313h1v1h-1zM371 313h2v1h-2zM369 314h1v1h-1zM373 314h7v1h-7zM381 304h3v1h-3zM386 304h1v1h-1zM390 304h1v1h-1zM383 305h1v1h-1zM386 305h1v1h-1zM390 305h1v1h-1zM383 306h1v1h-1zM386 306h1v1h-1zM389 306h1v1h-1zM381 307h3v1h-3zM386 307h3v1h-3zM381 308h1v1h-1zM386 308h1v1h-1zM381 309h1v1h-1zM384 309h8v1h-8zM381 310h3v1h-3zM386 310h1v1h-1zM388 310h1v1h-1zM383 311h1v1h-1zM386 311h1v1h-1zM388 311h1v1h-1zM383 312h1v1h-1zM386 312h1v1h-1zM389 312h1v1h-1zM381 313h1v1h-1zM383 313h1v1h-1zM386 313h2v1h-2zM390 313h1v1h-1zM382 314h1v1h-1zM386 314h1v1h-1zM391 314h1v1h-1zM398 304h1v1h-1zM398 305h1v1h-1zM398 306h5v1h-5zM398 307h1v1h-1zM395 308h7v1h-7zM395 309h1v1h-1zM401 309h1v1h-1zM395 310h1v1h-1zM401 310h1v1h-1zM395 311h7v1h-7zM394 313h1v1h-1zM396 313h1v1h-1zM399 313h1v1h-1zM402 313h1v1h-1zM393 314h1v1h-1zM397 314h1v1h-1zM400 314h1v1h-1zM403 314h1v1h-1zM40 494h1v1h-1zM44 494h1v1h-1zM46 494h1v1h-1zM41 495h1v1h-1zM44 495h1v1h-1zM46 495h1v1h-1zM41 496h1v1h-1zM44 496h5v1h-5zM43 497h1v1h-1zM46 497h1v1h-1zM39 498h3v1h-3zM43 498h7v1h-7zM41 499h1v1h-1zM45 499h1v1h-1zM47 499h1v1h-1zM41 500h1v1h-1zM45 500h1v1h-1zM47 500h1v1h-1zM49 500h1v1h-1zM41 501h1v1h-1zM44 501h1v1h-1zM47 501h1v1h-1zM49 501h1v1h-1zM41 502h1v1h-1zM43 502h1v1h-1zM48 502h2v1h-2zM40 503h1v1h-1zM42 503h1v1h-1zM39 504h1v1h-1zM43 504h7v1h-7zM52 494h4v1h-4zM57 494h4v1h-4zM52 495h1v1h-1zM55 495h1v1h-1zM57 495h1v1h-1zM60 495h1v1h-1zM52 496h1v1h-1zM55 496h1v1h-1zM57 496h1v1h-1zM60 496h1v1h-1zM52 497h5v1h-5zM60 497h2v1h-2zM52 498h1v1h-1zM55 498h1v1h-1zM52 499h1v1h-1zM55 499h1v1h-1zM57 499h5v1h-5zM52 500h4v1h-4zM57 500h1v1h-1zM61 500h1v1h-1zM52 501h1v1h-1zM55 501h1v1h-1zM58 501h1v1h-1zM60 501h1v1h-1zM52 502h1v1h-1zM55 502h1v1h-1zM59 502h1v1h-1zM51 503h1v1h-1zM55 503h1v1h-1zM58 503h1v1h-1zM60 503h1v1h-1zM51 504h1v1h-1zM54 504h4v1h-4zM61 504h1v1h-1z"/><path fill="#ffff00" d="M63 304h1v1h-1zM63 305h1v1h-1zM57 306h5v1h-5zM63 306h1v1h-1zM59 307h1v1h-1zM62 307h6v1h-6zM59 308h1v1h-1zM62 308h1v1h-1zM66 308h1v1h-1zM59 309h1v1h-1zM61 309h2v1h-2zM66 309h1v1h-1zM59 310h1v1h-1zM63 310h1v1h-1zM65 310h1v1h-1zM59 311h3v1h-3zM64 311h1v1h-1zM57 312h2v1h-2zM63 312h1v1h-1zM65 312h1v1h-1zM62 313h1v1h-1zM66 313h1v1h-1zM60 314h2v1h-2zM67 314h1v1h-1zM74 304h1v1h-1zM74 305h1v1h-1zM70 306h9v1h-9zM74 307h1v1h-1zM74 308h1v1h-1zM69 309h11v1h-11zM74 310h1v1h-1zM70 311h1v1h-1zM74 311h1v1h-1zM78 311h1v1h-1zM70 312h1v1h-1zM74 312h1v1h-1zM78 312h1v1h-1zM70 313h1v1h-1zM74 313h1v1h-1zM78 313h1v1h-1zM70 314h9v1h-9zM83 304h1v1h-1zM87 304h1v1h-1zM89 304h1v1h-1zM83 305h1v1h-1zM87 305h1v1h-1zM90 305h1v1h-1zM82 306h1v1h-1zM87 306h4v1h-4zM82 307h1v1h-1zM85 307h3v1h-3zM81 308h3v1h-3zM87 308h5v1h-5zM83 309h1v1h-1zM85 309h3v1h-3zM82 310h1v1h-1zM87 310h1v1h-1zM90 310h1v1h-1zM81 311h4v1h-4zM87 311h1v1h-1zM89 311h1v1h-1zM85 312h1v1h-1zM88 312h1v1h-1zM91 312h1v1h-1zM83 313h2v1h-2zM87 313h1v1h-1zM89 313h1v1h-1zM91 313h1v1h-1zM81 314h2v1h-2zM85 314h2v1h-2zM90 314h2v1h-2z"/><path fill="#ffc800" d="M137 304h1v1h-1zM140 304h5v1h-5zM137 305h1v1h-1zM140 305h1v1h-1zM144 305h1v1h-1zM135 306h4v1h-4zM140 306h5v1h-5zM137 307h1v1h-1zM139 307h3v1h-3zM143 307h3v1h-3zM137 308h1v1h-1zM139 308h1v1h-1zM141 308h1v1h-1zM143 308h1v1h-1zM145 308h1v1h-1zM137 309h5v1h-5zM143 309h3v1h-3zM135 310h3v1h-3zM142 310h1v1h-1zM137 311h9v1h-9zM137 312h1v1h-1zM141 312h3v1h-3zM137 313h1v1h-1zM140 313h1v1h-1zM142 313h1v1h-1zM144 313h1v1h-1zM136 314h2v1h-2zM139 314h1v1h-1zM142 314h1v1h-1zM145 314h1v1h-1zM152 304h1v1h-1zM150 305h6v1h-6zM150 306h1v1h-1zM152 306h1v1h-1zM155 306h1v1h-1zM150 307h1v1h-1zM153 307h1v1h-1zM155 307h1v1h-1zM148 308h10v1h-10zM150 309h1v1h-1zM152 309h1v1h-1zM155 309h1v1h-1zM149 310h1v1h-1zM153 310h1v1h-1zM155 310h1v1h-1zM149 311h8v1h-8zM149 312h1v1h-1zM151 312h1v1h-1zM154 312h1v1h-1zM156 312h1v1h-1zM149 313h1v1h-1zM151 313h1v1h-1zM154 313h1v1h-1zM156 313h1v1h-1zM147 314h11v1h-11zM161 304h1v1h-1zM165 304h1v1h-1zM167 304h1v1h-1zM161 305h1v1h-1zM165 305h1v1h-1zM168 305h1v1h-1zM160 306h1v1h-1zM165 306h4v1h-4zM160 307h1v1h-1zM163 307h3v1h-3zM159 308h3v1h-3zM165 308h5v1h-5zM161 309h1v1h-1zM163 309h3v1h-3zM160 310h1v1h-1zM165 310h1v1h-1zM168 310h1v1h-1zM159 311h4v1h-4zM165 311h1v1h-1zM167 311h1v1h-1zM163 312h1v1h-1zM166 312h1v1h-1zM169 312h1v1h-1zM161 313h2v1h-2zM165 313h1v1h-1zM167 313h1v1h-1zM169 313h1v1h-1zM159 314h2v1h-2zM163 314h2v1h-2zM168 314h2v1h-2z"/><path fill="#ff8000" d="M214 304h1v1h-1zM219 304h1v1h-1zM215 305h1v1h-1zM219 305h1v1h-1zM215 306h1v1h-1zM217 306h6v1h-6zM219 307h1v1h-1zM222 307h1v1h-1zM215 308h1v1h-1zM219 308h1v1h-1zM222 308h1v1h-1zM215 309h1v1h-1zM219 309h1v1h-1zM222 309h1v1h-1zM214 310h1v1h-1zM216 310h8v1h-8zM213 311h2v1h-2zM219 311h1v1h-1zM214 312h1v1h-1zM218 312h1v1h-1zM220 312h1v1h-1zM214 313h1v1h-1zM217 313h1v1h-1zM221 313h1v1h-1zM214 314h1v1h-1zM216 314h1v1h-1zM222 314h2v1h-2zM226 304h1v1h-1zM231 304h1v1h-1zM226 305h4v1h-4zM231 305h5v1h-5zM225 306h1v1h-1zM227 306h1v1h-1zM231 306h1v1h-1zM233 306h1v1h-1zM228 307h1v1h-1zM230 307h1v1h-1zM234 307h1v1h-1zM225 308h11v1h-11zM230 309h1v1h-1zM226 310h9v1h-9zM226 311h1v1h-1zM229 311h3v1h-3zM234 311h1v1h-1zM226 312h1v1h-1zM228 312h1v1h-1zM230 312h1v1h-1zM232 312h1v1h-1zM234 312h1v1h-1zM227 313h1v1h-1zM230 313h1v1h-1zM233 313h1v1h-1zM225 314h2v1h-2zM230 314h1v1h-1zM234 314h2v1h-2zM239 304h1v1h-1zM243 304h1v1h-1zM245 304h1v1h-1zM239 305h1v1h-1zM243 305h1v1h-1zM246 305h1v1h-1zM238 306h1v1h-1zM243 306h4v1h-4zM238 307h1v1h-1zM241 307h3v1h-3zM237 308h3v1h-3zM243 308h5v1h-5zM239 309h1v1h-1zM241 309h3v1h-3zM238 310h1v1h-1zM243 310h1v1h-1zM246 310h1v1h-1zM237 311h4v1h-4zM243 311h1v1h-1zM245 311h1v1h-1zM241 312h1v1h-1zM244 312h1v1h-1zM247 312h1v1h-1zM239 313h2v1h-2zM243 313h1v1h-1zM245 313h1v1h-1zM247 313h1v1h-1zM237 314h2v1h-2zM241 314h2v1h-2zM246 314h2v1h-2z"/><path fill="#ff0000" d="M297 304h1v1h-1zM293 305h1v1h-1zM297 305h1v1h-1zM293 306h1v1h-1zM297 306h1v1h-1zM293 307h9v1h-9zM292 308h1v1h-1zM297 308h1v1h-1zM291 309h1v1h-1zM297 309h1v1h-1zM294 310h7v1h-7zM297 311h1v1h-1zM297 312h1v1h-1zM297 313h1v1h-1zM292 314h10v1h-10zM308 304h1v1h-1zM307 305h1v1h-1zM309 305h1v1h-1zM306 306h1v1h-1zM310 306h1v1h-1zM303 307h3v1h-3zM307 307h3v1h-3zM311 307h3v1h-3zM304 309h4v1h-4zM309 309h4v1h-4zM304 310h1v1h-1zM307 310h1v1h-1zM309 310h1v1h-1zM312 310h1v1h-1zM304 311h1v1h-1zM307 311h1v1h-1zM309 311h1v1h-1zM312 311h1v1h-1zM304 312h4v1h-4zM309 312h1v1h-1zM312 312h1v1h-1zM304 313h1v1h-1zM307 313h1v1h-1zM309 313h1v1h-1zM311 313h2v1h-2zM309 314h1v1h-1zM317 304h1v1h-1zM321 304h1v1h-1zM323 304h1v1h-1zM317 305h1v1h-1zM321 305h1v1h-1zM324 305h1v1h-1zM316 306h1v1h-1zM321 306h4v1h-4zM316 307h1v1h-1zM319 307h3v1h-3zM315 308h3v1h-3zM321 308h5v1h-5zM317 309h1v1h-1zM319 309h3v1h-3zM316 310h1v1h-1zM321 310h1v1h-1zM324 310h1v1h-1zM315 311h4v1h-4zM321 311h1v1h-1zM323 311h1v1h-1zM319 312h1v1h-1zM322 312h1v1h-1zM325 312h1v1h-1zM317 313h2v1h-2zM321 313h1v1h-1zM323 313h1v1h-1zM325 313h1v1h-1zM315 314h2v1h-2zM319 314h2v1h-2zM324 314h2v1h-2z"/><path fill="#ffffff" d="M784 288h5v1h-5zM792 288h1v1h-1zM784 289h1v1h-1zM788 289h1v1h-1zM792 289h1v1h-1zM784 290h1v1h-1zM786 290h1v1h-1zM788 290h7v1h-7zM784 291h1v1h-1zM786 291h1v1h-1zM788 291h1v1h-1zM792 291h1v1h-1zM784 292h1v1h-1zM786 292h1v1h-1zM788 292h1v1h-1zM791 292h2v1h-2zM784 293h1v1h-1zM786 293h1v1h-1zM788 293h1v1h-1zM791 293h2v1h-2zM784 294h1v1h-1zM786 294h1v1h-1zM788 294h1v1h-1zM790 294h1v1h-1zM792 294h1v1h-1zM786 295h1v1h-1zM790 295h1v1h-1zM792 295h1v1h-1zM785 296h1v1h-1zM787 296h1v1h-1zM789 296h1v1h-1zM792 296h1v1h-1zM785 297h1v1h-1zM788 297h1v1h-1zM792 297h1v1h-1zM784 298h1v1h-1zM791 298h2v1h-2zM894 288h2v1h-2zM886 289h1v1h-1zM894 289h1v1h-1zM896 289h1v1h-1zM887 290h1v1h-1zM889 290h8v1h-8zM887 291h1v1h-1zM889 291h1v1h-1zM894 291h1v1h-1zM889 292h1v1h-1zM891 292h4v1h-4zM888 293h2v1h-2zM894 293h1v1h-1zM896 293h1v1h-1zM887 294h1v1h-1zM889 294h1v1h-1zM891 294h4v1h-4zM896 294h1v1h-1zM886 295h2v1h-2zM889 295h1v1h-1zM891 295h1v1h-1zM893 295h3v1h-3zM887 296h1v1h-1zM889 296h1v1h-1zM891 296h2v1h-2zM894 296h1v1h-1zM896 296h1v1h-1zM887 297h1v1h-1zM889 297h1v1h-1zM893 297h1v1h-1zM895 297h2v1h-2zM887 298h2v1h-2zM892 298h1v1h-1zM896 298h1v1h-1z"/></svg>
<div class="wm">www.cfchi.com</div>
</body></html>
